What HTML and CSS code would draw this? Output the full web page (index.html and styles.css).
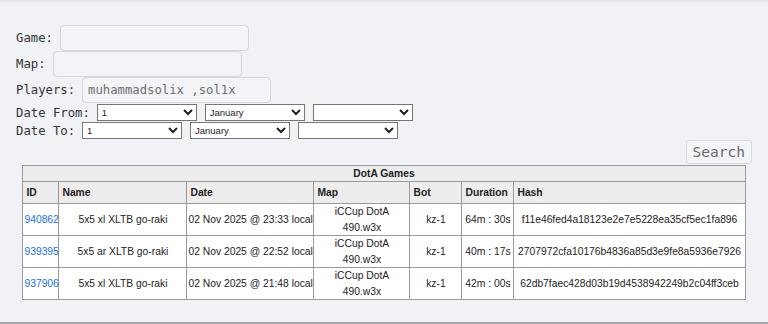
FILE: index.html
```html
<!DOCTYPE html>
<html lang="en">
<head>
    <meta charset="UTF-8">
    <meta name="viewport" content="width=device-width, initial-scale=1.0">
    <title>DotA Games</title>
    <link rel="stylesheet" href="styles.css">
</head>
<body>
    <div class="page">
        <form class="search-form">
            <div class="row">
                <label for="game">Game:</label>
                <input type="text" id="game" class="text-input">
            </div>
            <div class="row">
                <label for="map">Map:</label>
                <input type="text" id="map" class="text-input">
            </div>
            <div class="row">
                <label for="players">Players:</label>
                <input type="text" id="players" class="text-input" value="muhammadsolix ,sol1x">
            </div>
            <div class="row date-row">
                <label>Date From:</label>
                <select><option>1</option></select>
                <select><option>January</option></select>
                <select><option></option></select>
            </div>
            <div class="row date-row">
                <label>Date To:</label>
                <select><option>1</option></select>
                <select><option>January</option></select>
                <select><option></option></select>
            </div>
            <div class="button-row">
                <button type="submit">Search</button>
            </div>
        </form>

        <table class="games">
            <colgroup>
                <col style="width: 36px">
                <col style="width: 128px">
                <col style="width: 127px">
                <col style="width: 96px">
                <col style="width: 52px">
                <col style="width: 52px">
                <col style="width: 231px">
            </colgroup>
            <thead>
                <tr><th colspan="7" class="title">DotA Games</th></tr>
                <tr>
                    <th>ID</th>
                    <th>Name</th>
                    <th>Date</th>
                    <th>Map</th>
                    <th>Bot</th>
                    <th>Duration</th>
                    <th>Hash</th>
                </tr>
            </thead>
            <tbody>
                <tr>
                    <td><a href="#">940862</a></td>
                    <td>5x5 xl XLTB go-raki</td>
                    <td class="nowrap">02 Nov 2025 @ 23:33 local</td>
                    <td>iCCup DotA 490.w3x</td>
                    <td>kz-1</td>
                    <td class="nowrap">64m : 30s</td>
                    <td>f11e46fed4a18123e2e7e5228ea35cf5ec1fa896</td>
                </tr>
                <tr>
                    <td><a href="#">939395</a></td>
                    <td>5x5 ar XLTB go-raki</td>
                    <td class="nowrap">02 Nov 2025 @ 22:52 local</td>
                    <td>iCCup DotA 490.w3x</td>
                    <td>kz-1</td>
                    <td class="nowrap">40m : 17s</td>
                    <td>2707972cfa10176b4836a85d3e9fe8a5936e7926</td>
                </tr>
                <tr>
                    <td><a href="#">937906</a></td>
                    <td>5x5 xl XLTB go-raki</td>
                    <td class="nowrap">02 Nov 2025 @ 21:48 local</td>
                    <td>iCCup DotA 490.w3x</td>
                    <td>kz-1</td>
                    <td class="nowrap">42m : 00s</td>
                    <td>62db7faec428d03b19d4538942249b2c04ff3ceb</td>
                </tr>
            </tbody>
        </table>
    </div>
</body>
</html>
```

FILE: styles.css
```css
html, body {
    margin: 0;
    padding: 0;
}
body {
    background: #f1f2f6;
    font-family: "DejaVu Sans Mono", "Liberation Mono", monospace;
}
.page {
    height: 324px;
    box-sizing: border-box;
    border-top: 2px solid #e3e5e9;
    border-bottom: 2px solid #a4a6a9;
    padding-top: 23px;
}
.search-form {
    padding: 0 16px;
}
.row {
    display: flex;
    align-items: center;
    gap: 7px;
    font-size: 12.25px;
    color: #333;
}
.text-input {
    width: 189px;
    height: 26px;
    box-sizing: border-box;
    margin: 0;
    padding: 0 5px;
    border: 1px solid #d3d6db;
    border-radius: 4px;
    background: #f3f4f7;
    font-family: "DejaVu Sans Mono", "Liberation Mono", monospace;
    font-size: 12.25px;
    color: #6e6e6e;
}
.date-row {
    gap: 8px;
    margin-top: 1px;
}
.date-row label {
    margin-right: -1px;
}
select {
    width: 100px;
    height: 17px;
    margin: 0;
    font-family: "Liberation Sans", Arial, sans-serif;
    font-size: 9.5px;
    color: #222;
    background: #fff;
}
.button-row {
    display: flex;
    justify-content: flex-end;
    margin-top: 1px;
}
button {
    height: 24px;
    padding: 0 6px;
    border: 1px solid #d6d9de;
    border-radius: 3px;
    background: #f4f5f8;
    font-family: "DejaVu Sans Mono", "Liberation Mono", monospace;
    font-size: 14.5px;
    color: #6a6a6a;
}
.games {
    margin: 1px auto 0;
    width: 722px;
    table-layout: fixed;
    border-collapse: collapse;
    border: 1px solid #9a9a9a;
    font-family: "Liberation Sans", Arial, sans-serif;
    font-size: 10.3px;
    color: #222;
}
.games th {
    background: #ededed;
    border: 1px solid #9a9a9a;
    text-align: left;
    padding: 3px 3px;
    height: 22px;
    box-sizing: border-box;
    font-weight: bold;
}
.games th.title {
    text-align: center;
    height: 16px;
    padding: 0;
}
.games td {
    background: #fff;
    border: 1px solid #9a9a9a;
    text-align: center;
    height: 31px;
    padding: 0 1px;
    line-height: 15.5px;
    box-sizing: border-box;
}
.games td.nowrap {
    white-space: nowrap;
    overflow: hidden;
}
.games a {
    color: #1a73e8;
    text-decoration: none;
}
```
